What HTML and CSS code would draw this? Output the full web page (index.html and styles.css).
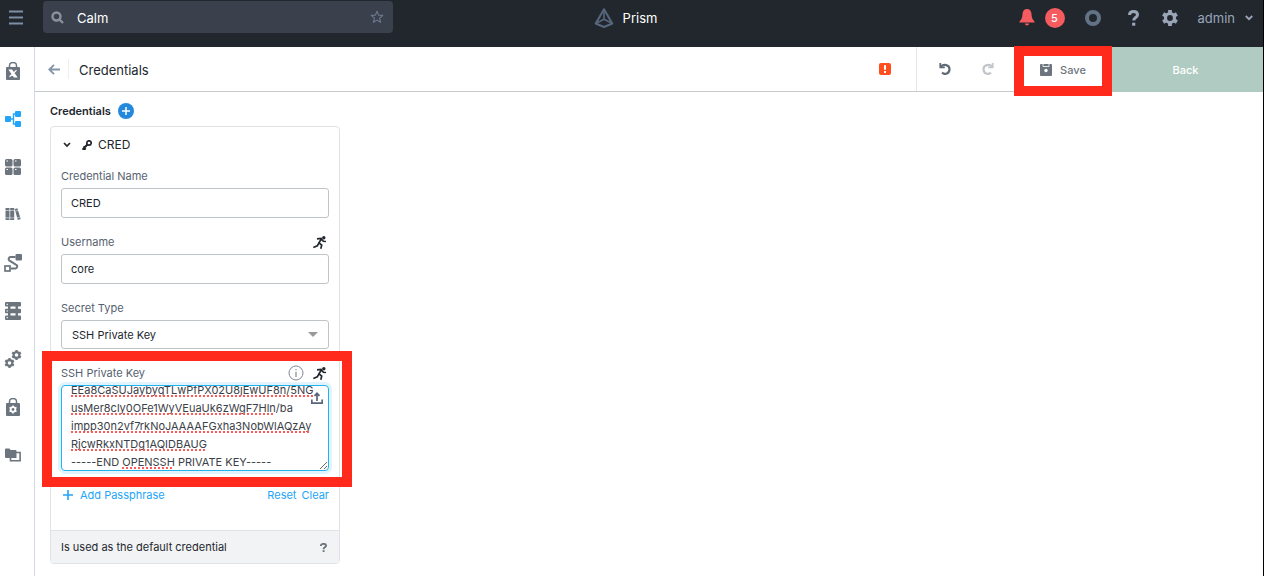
FILE: index.html
```html
<!DOCTYPE html>
<html lang="en">
<head>
  <meta charset="UTF-8">
  <meta name="viewport" content="width=device-width, initial-scale=1">
  <title>Prism - Calm Credentials</title>
  <link rel="stylesheet" href="styles.css">
</head>
<body>

<header class="topbar">
  <div class="topbar-left">
    <button class="icon-btn menu" aria-label="Menu">
      <svg width="14" height="15" viewBox="0 0 14 15" stroke="#7b8fa6" stroke-width="2"><path d="M0 1.500h14M0 7.500h14M0 13.500h14"/></svg>
    </button>
    <div class="search">
      <svg width="13" height="13" viewBox="0 0 13 13" fill="none" stroke="#8b929c" stroke-width="2.400"><circle cx="5.500" cy="5.500" r="4"/><path d="M8.500 8.500l3.500 3.500"/></svg>
      <input type="text" value="Calm" aria-label="Search">
      <button class="icon-btn" aria-label="Add to favorites">
        <svg width="14" height="14" viewBox="0 0 14 14" fill="none" stroke="#6b7a8f" stroke-width="1.100" stroke-linejoin="round"><path d="M7 1.200l1.600 3.900 4.200.3-3.200 2.700 1 4.200L7 10.100l-3.600 2.200 1-4.200L1.200 5.400l4.200-.3z"/></svg>
      </button>
    </div>
  </div>

  <div class="brand">
    <svg width="20" height="20" viewBox="0 0 20 20" fill="none" stroke="#56677c" stroke-width="2" stroke-linejoin="round"><path d="M10 1.200L18.300 15.500 10 19 1.700 15.500z"/><path d="M10 2v9.500M2 15.300l8-4 8 4" stroke-width="1.600"/></svg>
    <span>Prism</span>
  </div>

  <div class="topbar-right">
    <button class="icon-btn alerts" aria-label="Alerts">
      <svg width="16" height="17" viewBox="0 0 16 17" fill="#f55b5f"><path d="M8 0c-3 0-4.300 2-4.500 5C3.300 9 2.500 10.500.5 12.500V13.500h15v-1C13.500 10.500 12.700 9 12.500 5 12.300 2 11 0 8 0zM6 14.500h4c0 1.200-.8 2-2 2s-2-.8-2-2z"/></svg>
      <span class="badge">5</span>
    </button>
    <button class="icon-btn tasks" aria-label="Tasks">
      <svg width="16" height="16" viewBox="0 0 16 16" fill="none" stroke="#627386" stroke-width="4"><circle cx="8" cy="8" r="6"/></svg>
    </button>
    <button class="icon-btn help" aria-label="Help">
      <svg width="11" height="16" viewBox="0 0 11 16" fill="none" stroke="#9aa5b8" stroke-width="3"><path d="M1.500 5C1.600 2.800 3.200 1.500 5.500 1.500c2.400 0 4 1.200 4 3.200 0 2.900-3.800 2.700-3.800 5.800"/><path d="M4.100 14.200h3.200"/></svg>
    </button>
    <button class="icon-btn settings" aria-label="Settings">
      <svg width="16" height="16" viewBox="0 0 16 16"><g fill="none" stroke="#9aa5b8"><circle cx="8" cy="8" r="4.500" stroke-width="3.200"/><path stroke-width="3.800" d="M8 0v3M8 13v3M1.100 4l2.600 1.500M12.300 10.500l2.600 1.500M1.100 12l2.600-1.500M12.300 5.500L14.900 4"/></g></svg>
    </button>
    <button class="user">admin
      <svg width="8" height="6" viewBox="0 0 8 6" fill="none" stroke="#9aa5b8" stroke-width="1.800"><path d="M.8 1l3.200 3.200L7.200 1"/></svg>
    </button>
  </div>
</header>

<div class="layout">
  <nav class="sidebar">
    <a href="#" aria-label="Marketplace">
      <svg width="16" height="18" viewBox="0 0 16 18"><path d="M4.500 6V3.500a3.500 3 0 0 1 7 0V6" fill="none" stroke="#6c757e" stroke-width="1.500"/><rect x="1" y="5" width="14" height="13" rx="1" fill="#6c757e"/><path d="M4.500 8.200h2.300l4.700 6.600H9.200zM11.500 8.200L8.700 11M7.300 12.200l-2.800 2.600" fill="#fff" stroke="#fff" stroke-width="1.200"/></svg>
    </a>
    <a href="#" aria-label="Blueprints">
      <svg width="16" height="16" viewBox="0 0 16 16" fill="#22a5f7"><rect y="5" width="6" height="6" rx="1"/><rect x="10" width="6" height="6" rx="1"/><rect x="10" y="10" width="6" height="6" rx="1"/><path d="M6 8h2.500M10 3H8.500v10H10" fill="none" stroke="#22a5f7" stroke-width="1.400"/></svg>
    </a>
    <a href="#" aria-label="Applications">
      <svg width="16" height="16" viewBox="0 0 16 16" fill="#6c757e"><rect width="7.500" height="7.500" rx="1.500"/><rect x="8.500" width="7.500" height="7.500" rx="1.500"/><rect y="8.500" width="7.500" height="7.500" rx="1.500"/><rect x="8.500" y="8.500" width="7.500" height="7.500" rx="1.500"/><path d="M1.500 2h1.500M10 2h1.500M1.500 10.500h1.500M10 10.500h1.500" stroke="#fff"/></svg>
    </a>
    <a href="#" aria-label="Library">
      <svg width="16" height="14" viewBox="0 0 16 14" fill="#6c757e"><path d="M.5 0h4v12h-4zM5.200 0h4v12h-4zM9.700 1l2.700-.8 3.300 10.800-2.900.9z"/><path d="M0 2.500h9.500M0 9.800h9.500M10 3.300l3-.9M12 10l3-.9" stroke="#fff" stroke-width=".5"/></svg>
    </a>
    <a href="#" aria-label="Runbooks">
      <svg width="18" height="18" viewBox="0 0 18 18"><path d="M11.500 3H6.500a2 2 0 0 0-1.300 3.400l6.600 4.200a2 2 0 0 1-.8 3.900H6.500" fill="none" stroke="#6c757e" stroke-width="2"/><rect x="11.500" width="6.500" height="6.500" rx="1" fill="#6c757e"/><rect x="1" y="12" width="5" height="5" fill="none" stroke="#6c757e" stroke-width="1.700"/></svg>
    </a>
    <a href="#" aria-label="Services">
      <svg width="16" height="18" viewBox="0 0 16 18" fill="#6c757e"><rect width="16" height="4.600" rx="1"/><rect y="6.700" width="16" height="4.600" rx="1"/><rect y="13.400" width="16" height="4.600" rx="1"/><path d="M3 4h2.500v10H3zM10.500 4H13v10h-2.500z"/><path d="M1.500 2.300H3M1.500 9H3M1.500 15.700H3" stroke="#fff"/></svg>
    </a>
    <a href="#" aria-label="Settings">
      <svg width="18" height="18" viewBox="0 0 18 18" fill="none" stroke="#6c757e"><circle cx="12.500" cy="5" r="2.900" stroke-width="2.200"/><path stroke-width="2.200" d="M12.500 0v2M12.500 8v2M8.200 2.500l1.700 1M15.100 6.500l1.700 1M8.200 7.500l1.700-1M15.100 3.500l1.700-1"/><circle cx="5.500" cy="13" r="2.900" stroke-width="2.200"/><path stroke-width="2.200" d="M5.500 8v2M5.500 16v2M1.200 10.500l1.700 1M8.100 14.500l1.700 1M1.200 15.500l1.700-1M8.100 11.500l1.700-1"/></svg>
    </a>
    <a href="#" aria-label="Policies">
      <svg width="16" height="18" viewBox="0 0 16 18"><path d="M4.500 6V3.500a3.500 3 0 0 1 7 0V6" fill="none" stroke="#6c757e" stroke-width="1.500"/><rect x="1" y="5" width="14" height="13" rx="1" fill="#6c757e"/><circle cx="8" cy="11.500" r="2.300" fill="none" stroke="#fff" stroke-width="1.700"/><path stroke="#fff" stroke-width="1.500" d="M8 7.500v2M8 13.500v2M4.500 9.500l1.700 1M9.800 12.500l1.700 1M4.500 13.500l1.700-1M9.800 10.500l1.700-1"/></svg>
    </a>
    <a href="#" aria-label="Projects">
      <svg width="16" height="14" viewBox="0 0 16 14"><path d="M5.500 4.500h9.600v8.300H5.500z" fill="#fff" stroke="#6c757e" stroke-width="1.600"/><path d="M0 1.500Q0 .5 1 .5h3.500l1 1.500h5q1 0 1 1V10H1Q0 10 0 9z" fill="#6c757e"/></svg>
    </a>
  </nav>

  <main class="main">
    <div class="toolbar">
      <button class="icon-btn back-arrow" aria-label="Go back">
        <svg width="12" height="11" viewBox="0 0 12 11" fill="none" stroke="#8494a9" stroke-width="1.800"><path d="M12 5.500H1.500M6 .8L1.300 5.500 6 10.200"/></svg>
      </button>
      <h1>Credentials</h1>
      <button class="icon-btn errors" aria-label="Errors">
        <svg width="12" height="12" viewBox="0 0 12 12"><rect width="12" height="12" rx="2" fill="#ff4f1f"/><path d="M6 2.200v4.600M6 8v2" stroke="#fff" stroke-width="2"/></svg>
      </button>
      <div class="history">
        <button class="icon-btn" aria-label="Undo">
          <svg width="12" height="12" viewBox="0 0 12 12" fill="none" stroke="#5f6a75" stroke-width="2.200"><path d="M1.300 0v4.300h4.500" stroke-width="1.800"/><path d="M1.800 3.800C4.500.8 10.500 1.500 10.500 6.200c0 4.300-4.500 6-7.500 3.500"/></svg>
        </button>
        <button class="icon-btn" aria-label="Redo">
          <svg width="12" height="12" viewBox="0 0 12 12" fill="none" stroke="#c3c6ca" stroke-width="2.200"><path d="M10.700 0v4.300H6.200" stroke-width="1.800"/><path d="M10.200 3.800C7.500.8 1.500 1.500 1.500 6.200c0 4.300 4.500 6 7.500 3.500"/></svg>
        </button>
      </div>
      <button class="save highlight">
        <svg width="12" height="12" viewBox="0 0 12 12"><path d="M1 0h10q1 0 1 1v10q0 1-1 1H1q-1 0-1-1V1q0-1 1-1z" fill="#6c757e"/><path d="M3 0v2.500h6V0" fill="none" stroke="#fff" stroke-width=".8"/><circle cx="6" cy="6.500" r="1.700" fill="#fff"/></svg>
        Save
      </button>
      <button class="back">Back</button>
    </div>

    <section class="content">
      <div class="section-title">
        <h2>Credentials</h2>
        <button class="icon-btn" aria-label="Add credential">
          <svg width="16" height="16" viewBox="0 0 16 16"><circle cx="8" cy="8" r="8" fill="#2489dc"/><path d="M8 4v8M4 8h8" stroke="#fff" stroke-width="1.500"/></svg>
        </button>
      </div>

      <form class="card">
        <div class="card-head">
          <button type="button" class="icon-btn" aria-label="Collapse">
            <svg width="8" height="6" viewBox="0 0 8 6" fill="none" stroke="#22272e" stroke-width="1.700"><path d="M1 1l3 3 3-3"/></svg>
          </button>
          <svg width="10" height="10" viewBox="0 0 10 10" fill="none" stroke="#22272e"><circle cx="7" cy="3" r="2.200" stroke-width="1.700"/><path d="M5.500 4.500L.8 9.200M1.500 6.500l2.200 2.200M.3 9h3.500" stroke-width="2"/></svg>
          <span>CRED</span>
        </div>

        <div class="card-body">
          <div class="field">
            <div class="field-label"><label for="cred-name">Credential Name</label></div>
            <input id="cred-name" type="text" value="CRED">
          </div>

          <div class="field">
            <div class="field-label">
              <label for="username">Username</label>
              <button type="button" class="icon-btn" aria-label="Set username at runtime">
                <svg width="14" height="13" viewBox="0 0 14 13" fill="none" stroke="#22272e" stroke-width="1.700"><circle cx="10.800" cy="1.700" r="1.700" fill="#22272e" stroke="none"/><path d="M4 2.800l4-.3 2.300 2.800 2.700.2M8.300 3L6 6.800l2.700 2.300-.9 3.700M6.200 6.500L4.300 9.800.3 11.500"/></svg>
              </button>
            </div>
            <input id="username" type="text" value="core">
          </div>

          <div class="field">
            <div class="field-label"><label for="secret-type">Secret Type</label></div>
            <div class="select">
              <select id="secret-type">
                <option>SSH Private Key</option>
                <option>Password</option>
              </select>
            </div>
          </div>

          <div class="field highlight key-field">
            <div class="field-label">
              <label for="ssh-key">SSH Private Key</label>
              <span class="label-icons">
                <button type="button" class="icon-btn" aria-label="Info">
                  <svg width="16" height="16" viewBox="0 0 16 16" fill="none" stroke="#7f8a99"><circle cx="8" cy="8" r="7"/><path d="M8 6.800V12M8 4v1.300" stroke-width="1.200"/></svg>
                </button>
                <button type="button" class="icon-btn" aria-label="Set key at runtime">
                  <svg width="14" height="13" viewBox="0 0 14 13" fill="none" stroke="#22272e" stroke-width="1.700"><circle cx="10.800" cy="1.700" r="1.700" fill="#22272e" stroke="none"/><path d="M4 2.800l4-.3 2.300 2.800 2.700.2M8.300 3L6 6.800l2.700 2.300-.9 3.700M6.200 6.500L4.300 9.800.3 11.500"/></svg>
                </button>
              </span>
            </div>
            <div class="key-box">
              <textarea id="ssh-key" spellcheck="true">EEa8CaSUJaybyqTLwPfPX02U8jEwUF8n/5NG
usMer8cly0OFe1WyVEuaUk6zWgF7Hln/ba
impp30n2vf7rkNoJAAAAFGxha3NobWlAQzAy
RjcwRkxNTDg1AQIDBAUG
-----END OPENSSH PRIVATE KEY-----</textarea>
              <div class="spelling" aria-hidden="true"></div>
              <button type="button" class="icon-btn upload" aria-label="Upload key file">
                <svg width="12" height="12" viewBox="0 0 12 12" fill="none" stroke="#56657a" stroke-width="1.700"><path d="M6 9V1.500M3.500 3.800L6 1.300l2.500 2.500M.8 7.500v3.700h10.400V7.500"/></svg>
              </button>
            </div>
          </div>

          <div class="actions">
            <button type="button" class="link add">
              <svg width="10" height="10" viewBox="0 0 10 10" stroke="#22a5f7" stroke-width="1.600"><path d="M5 0v10M0 5h10"/></svg>
              Add Passphrase
            </button>
            <button type="button" class="link">Reset</button>
            <button type="button" class="link">Clear</button>
          </div>
        </div>

        <div class="card-foot">
          <span>Is used as the default credential</span>
          <button type="button" class="icon-btn" aria-label="About default credential">
            <svg width="7" height="9" viewBox="0 0 7 9" fill="none" stroke="#6c757e" stroke-width="1.900"><path d="M.8 3C.9 1.500 2 .9 3.400.9c1.600 0 2.600.7 2.600 1.900C6 4.400 3.600 4.300 3.600 6.200"/><path d="M2.700 8.100h1.800"/></svg>
          </button>
        </div>
      </form>
    </section>
  </main>
</div>

<script>
  const key = document.getElementById('ssh-key');
  const spelling = document.querySelector('.spelling');

  function markSpelling() {
    spelling.textContent = '';
    key.value.split(/(\s+|-{2,}|\/ba)/).forEach((part) => {
      const unknown = /[A-Za-z0-9]{4,}/.test(part) && !['PRIVATE'].includes(part);
      const el = document.createElement(unknown ? 'u' : 'span');
      el.textContent = part;
      spelling.append(el);
    });
    spelling.scrollTop = key.scrollTop;
  }

  key.scrollTop = 5;
  key.addEventListener('input', markSpelling);
  key.addEventListener('scroll', () => { spelling.scrollTop = key.scrollTop; });
  markSpelling();
</script>

</body>
</html>
```
FILE: styles.css
```css
* {
  box-sizing: border-box;
}

body {
  margin: 0;
  min-height: 100vh;
  display: flex;
  flex-direction: column;
  border-right: 1px solid #000;
  background: #fff;
  color: #22272e;
  font-family: Inter, "Liberation Sans", sans-serif;
  font-size: 11px;
  line-height: 18px;
}

button,
input,
select,
textarea {
  font: inherit;
  color: inherit;
}

button {
  border: none;
  background: none;
  padding: 0;
  cursor: pointer;
}

svg {
  display: block;
  flex: none;
}

.icon-btn {
  display: flex;
  align-items: center;
}

/* top bar */
.topbar {
  display: grid;
  grid-template-columns: 1fr auto 1fr;
  align-items: start;
  height: 47px;
  background: #22272e;
  color: #fff;
}

.topbar-left {
  display: flex;
  align-items: center;
  padding-top: 1px;
}

.menu {
  width: 43px;
  padding-left: 9px;
}

.search {
  display: flex;
  align-items: center;
  width: 350px;
  height: 32px;
  padding: 0 9px 0 8px;
  border-radius: 4px;
  background: #3a414c;
}

.search input {
  flex: 1;
  min-width: 0;
  padding: 2px 0 0 13px;
  border: none;
  outline: none;
  background: none;
  font-size: 13px;
}

.brand {
  display: flex;
  align-items: center;
  gap: 9px;
  height: 35px;
  padding-right: 12px;
  font-size: 13px;
}

.topbar-right {
  display: flex;
  align-items: center;
  justify-content: flex-end;
  height: 35px;
  padding-right: 10px;
}

.badge {
  width: 20px;
  height: 20px;
  margin-left: 10px;
  border-radius: 50%;
  background: #f55b5f;
  color: #fff;
  font-weight: 500;
  line-height: 20px;
  text-align: center;
}

.tasks {
  margin-left: 20px;
}

.help {
  margin-left: 27px;
}

.settings {
  margin-left: 23px;
}

.user {
  display: flex;
  align-items: center;
  gap: 10px;
  margin-left: 20px;
  color: #9aa5b8;
  font-size: 13px;
}

/* layout */
.layout {
  flex: 1;
  display: flex;
}

.sidebar {
  width: 35px;
  border-right: 1px solid #d3dae1;
}

.sidebar a {
  display: flex;
  align-items: center;
  justify-content: center;
  height: 48px;
  padding-right: 8px;
}

.main {
  flex: 1;
  min-width: 0;
}

/* toolbar */
.toolbar {
  display: flex;
  align-items: stretch;
  height: 45px;
  border-bottom: 1px solid #c6cacc;
}

.back-arrow {
  width: 34px;
  margin: 12px 0;
  padding-left: 13px;
  border-right: 1px solid #eceef0;
}

.toolbar h1 {
  flex: 1;
  margin: 0;
  padding-left: 10px;
  font-size: 13px;
  font-weight: 400;
  line-height: 46px;
}

.errors {
  padding-right: 25px;
}

.history {
  display: flex;
  gap: 31px;
  width: 98px;
  padding-left: 22px;
  border-left: 1px solid #e4e6e8;
}

.save {
  display: flex;
  align-items: center;
  justify-content: center;
  gap: 8px;
  width: 98px;
  padding-top: 1px;
  color: #6c757e;
  font-weight: 500;
}

.back {
  width: 151px;
  height: 45px;
  padding-right: 4px;
  background: #b0cbc2;
  color: #fff;
  font-weight: 500;
}

.highlight {
  position: relative;
}

.highlight::after {
  content: "";
  position: absolute;
  inset: -1px 0 -5px;
  border: 10px solid #ff291c;
  pointer-events: none;
}

/* credentials */
.content {
  padding: 10px 15px 12px;
}

.section-title {
  display: flex;
  align-items: center;
  gap: 7px;
  margin-bottom: 6px;
}

.section-title h2 {
  margin: 0;
  font-size: 11px;
  font-weight: 600;
}

.card {
  width: 290px;
  border: 1px solid #dfe3e6;
  border-radius: 4px;
}

.card-head {
  display: flex;
  align-items: center;
  height: 36px;
  padding-left: 12px;
  font-size: 12px;
}

.card-head > svg {
  margin: 0 6px 0 11px;
}

.card-body {
  padding: 4px 10px 26px;
}

.field {
  margin-bottom: 15px;
}

.field-label {
  display: flex;
  align-items: center;
  justify-content: space-between;
  height: 18px;
  margin-bottom: 3px;
  padding-right: 2px;
  color: #56616f;
}

.label-icons {
  display: flex;
  gap: 9px;
}

.field input,
.field select {
  display: block;
  width: 100%;
  height: 30px;
  padding: 0 9px;
  border: 1px solid #bfc4c8;
  border-radius: 3px;
  background: #fff;
}

.select {
  position: relative;
}

.field select {
  appearance: none;
  height: 29px;
  padding: 0 10px;
}

.select::after {
  content: "";
  position: absolute;
  top: 12px;
  right: 11px;
  border: 5px solid transparent;
  border-top-color: #999;
  border-bottom: none;
  pointer-events: none;
}

.key-field::after {
  inset: -13px -23px -16px -19px;
}

.key-box {
  position: relative;
}

.key-box textarea,
.spelling {
  display: block;
  width: 100%;
  height: 86px;
  padding: 0 9px;
  border: 1px solid #22b1ec;
  border-radius: 4px;
  color: #3b4148;
  line-height: 18px;
  white-space: pre;
  overflow: hidden;
}

.key-box textarea {
  outline: none;
  resize: vertical;
  box-shadow: 0 0 0 3px #e1f4fd;
}

.key-box .spelling {
  position: absolute;
  inset: 0;
  border-color: transparent;
  color: transparent;
  pointer-events: none;
}

.spelling u {
  text-decoration: underline dotted 2px #ff5a57;
  text-decoration-skip-ink: none;
  text-underline-offset: 1px;
}

.upload {
  position: absolute;
  top: 7px;
  right: 6px;
}

.actions {
  display: flex;
  gap: 5px;
}

.link {
  color: #22a5f7;
}

.add {
  display: flex;
  align-items: center;
  gap: 7px;
  margin-right: auto;
  padding-left: 2px;
}

.card-foot {
  display: flex;
  align-items: center;
  justify-content: space-between;
  height: 33px;
  padding: 0 12px 0 10px;
  border-top: 1px solid #dfe3e6;
  border-radius: 0 0 4px 4px;
  background: #f2f3f5;
}
```
